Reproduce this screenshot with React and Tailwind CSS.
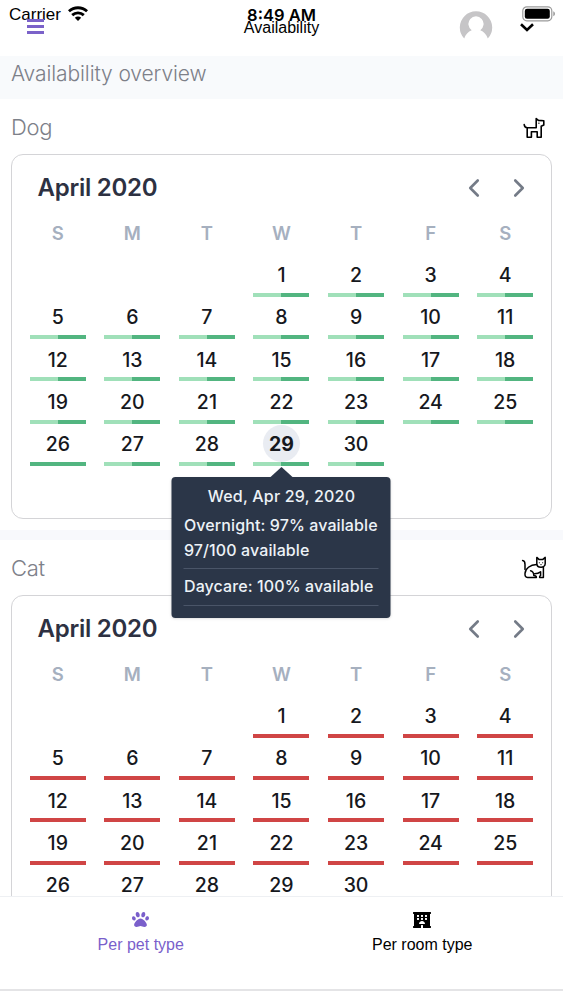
import { FaPaw, FaHotel } from 'react-icons/fa';
import { ChevronLeft, ChevronRight } from 'lucide-react';

const WEEKDAYS = ['S', 'M', 'T', 'W', 'T', 'F', 'S'];
const FIRST_WEEKDAY = 3;
const DAYS = Array.from({ length: 30 }, (_, i) => i + 1);

function WifiIcon() {
  return (
    <svg viewBox="0 0 20 15" className="-mt-[3px] ml-[2px] w-5 h-[15px]" fill="none" stroke="currentColor" strokeWidth="2.9">
      <path d="M0.9 5.3C6 0.5 14 0.5 19.1 5.3" />
      <path d="M4.2 9.1C7.5 6.1 12.5 6.1 15.8 9.1" />
      <path d="M10 15L6.8 11.7C8.6 10.1 11.4 10.1 13.2 11.7Z" fill="currentColor" stroke="none" />
    </svg>
  );
}

function BatteryIcon() {
  return (
    <svg viewBox="0 0 34 16" className="mt-px w-[34px] h-4">
      <rect x="0.8" y="0.8" width="29" height="14" rx="4" fill="#fff" stroke="#9b9b9b" strokeWidth="1.2" />
      <rect x="2.8" y="2.8" width="25" height="10" rx="2.2" fill="#000" />
      <path d="M31.4 5.3C33.3 6.2 33.3 9.4 31.4 10.3Z" fill="#8a8a8a" />
    </svg>
  );
}

function Avatar() {
  return (
    <svg viewBox="0 0 34 30" className="w-[34px] h-[30px]">
      <path
        d="M5.2 28.6A16.2 16.2 0 1 1 28.8 28.6C27.6 24.6 24.8 21.4 21.3 20.2A7.6 7.6 0 1 0 12.7 20.2C9.2 21.4 6.4 24.6 5.2 28.6Z"
        fill="#c6c5c7"
      />
    </svg>
  );
}

function DogIcon() {
  return (
    <svg viewBox="0 0 24 24" className="w-6 h-6" fill="none" stroke="#000" strokeWidth="1.6" strokeLinejoin="round" strokeLinecap="round">
      <path d="M1.2 9.6C1.4 11.4 2.4 12.6 4.2 12.8H13.2V3.6L15.4 5.4L20.8 5.8V10L18.2 11.2V22.2H14.2V16.8H8.4V22.2H4.2V12.8" />
      <path d="M15.8 8.2h.2" strokeWidth="1.2" />
    </svg>
  );
}

function CatIcon() {
  return (
    <svg viewBox="0 0 26 24" className="w-[26px] h-6" fill="none" stroke="#000" strokeWidth="1.5" strokeLinejoin="round" strokeLinecap="round">
      <path d="M1.6 4.6C3.6 4.8 4 6.2 4 8.4V13.6" />
      <path d="M15.6 8.6C9 8.8 4.4 12.6 4 17.4C3.8 20 4.6 21.4 6.6 21.4H15.4C15.4 20 14.4 19.4 12.8 19.4C12.8 17 11.6 15.4 9.6 14.8" />
      <path d="M15.8 1.4L18.2 3.6H21.6L24.2 1.4V7.4C24.2 9.8 22.2 11.2 20 11.2S15.8 9.8 15.8 7.4Z" />
      <path d="M22.4 11V21.4H18.6C18.4 20.2 18.8 19.6 19.6 19.4V15.8C18 17.2 16 17.8 13.6 17.8" />
      <path d="M18.3 6.8h.1M21.6 6.8h.1M19.9 8.6h.2" strokeWidth="1.1" />
    </svg>
  );
}

function Tooltip() {
  return (
    <div className="absolute left-1/2 top-[38px] z-20 -translate-x-1/2 w-[219px] h-[141px] rounded-[4px] bg-[#2b3648] px-3 pt-[7px] text-left text-[16px] font-medium tracking-[0.1px] text-[#edf2f7] shadow">
      <div className="absolute -top-[10px] left-1/2 -translate-x-1/2 border-x-[11px] border-b-[10px] border-x-transparent border-b-[#2b3648]" />
      <p className="text-center leading-6 tracking-[0.2px]">Wed, Apr 29, 2020</p>
      <p className="mt-[5px] leading-6 whitespace-nowrap">Overnight: 97% available</p>
      <p className="mt-px leading-6 whitespace-nowrap">97/100 available</p>
      <div className="mt-[6px] border-t border-[#4a5568]" />
      <p className="mt-[5px] leading-6 whitespace-nowrap">Daycare: 100% available</p>
      <div className="mt-[7px] border-t border-[#4a5568]" />
    </div>
  );
}

function Bar({ full, available }) {
  if (!available) return <div className="h-1 w-14 bg-[#d04545]" />;
  return (
    <div className="flex h-1 w-14">
      <div className={full ? 'w-1/2 bg-[#52b580]' : 'w-1/2 bg-[#a0e0b9]'} />
      <div className="w-1/2 bg-[#52b580]" />
    </div>
  );
}

function Calendar({ available, selected }) {
  return (
    <div className="mx-[11px] h-[365px] rounded-xl border border-[#d4d4d7] px-[8.5px] font-[Inter,sans-serif]">
      <div className="flex h-[66px] items-center justify-between pl-[17px] pr-[9px]">
        <h2 className="text-[24px] font-semibold tracking-[-0.25px] text-[#2d3142]">April 2020</h2>
        <div className="flex gap-[15px] text-[#747b87]">
          <ChevronLeft size={30} strokeWidth={2.1} />
          <ChevronRight size={30} strokeWidth={2.1} />
        </div>
      </div>
      <div className="grid grid-cols-7 h-[33.5px] text-center text-[18.5px] leading-[25px] font-semibold text-[#a6b0bf]">
        {WEEKDAYS.map((d, i) => (
          <div key={i}>{d}</div>
        ))}
      </div>
      <div className="grid grid-cols-7 auto-rows-[42.25px] text-[19.5px] text-[#16181d]">
        {Array.from({ length: FIRST_WEEKDAY }, (_, i) => (
          <div key={`blank-${i}`} />
        ))}
        {DAYS.map((day) => (
          <div key={day} className="relative flex flex-col items-center justify-end">
            <div
              className={
                day === selected
                  ? 'flex h-[37px] w-[37px] items-center justify-center rounded-full bg-[#e9ecf2] pt-[2px] font-bold'
                  : 'flex h-[37px] items-center justify-center pt-[3px] font-medium'
              }
            >
              {day}
            </div>
            <Bar available={available} full={day === 26} />
            {day === selected && (
              <div className="absolute inset-x-0 top-[15px]">
                <Tooltip />
              </div>
            )}
          </div>
        ))}
      </div>
    </div>
  );
}

function PetSection({ name, icon, available, selected }) {
  return (
    <section>
      <div className="flex h-[55px] items-center justify-between pl-[11px] pr-4">
        <h3 className="pt-[2px] text-[22px] font-light tracking-[-0.3px] font-[Inter,sans-serif] text-[#7d8089]">{name}</h3>
        {icon}
      </div>
      <Calendar available={available} selected={selected} />
    </section>
  );
}

export default function App() {
  return (
    <div className="flex h-[1000px] w-[563px] flex-col overflow-hidden bg-white font-['Liberation_Sans',sans-serif] text-black">
      <header className="relative h-14 shrink-0 bg-white">
        <div className="grid grid-cols-3 pt-[5px] leading-5">
          <div className="flex items-center gap-[5px] pl-[9px]">
            <span className="text-[17px]">Carrier</span>
            <WifiIcon />
          </div>
          <div className="text-center font-[Inter,sans-serif] text-[16.5px] font-semibold">8:49 AM</div>
          <div className="flex justify-end pr-[7px]">
            <BatteryIcon />
          </div>
        </div>
        {/* app bar sits under the device status bar */}
        <div className="absolute left-[27px] top-[19px] flex w-[17px] flex-col gap-[3px]">
          <span className="h-[3px] bg-[#7b62c9]" />
          <span className="h-[3px] bg-[#7b62c9]" />
          <span className="h-[3px] bg-[#7b62c9]" />
        </div>
        <div className="absolute inset-x-0 top-[18px] text-center text-[16px] leading-5">Availability</div>
        <div className="absolute left-[459px] top-[10px]">
          <Avatar />
        </div>
        <svg viewBox="0 0 14 9" className="absolute left-[520px] top-[23px] h-[9px] w-[14px]" fill="none" stroke="#000" strokeWidth="2.6">
          <path d="M1 1.2L7 6.9L13 1.2" />
        </svg>
      </header>

      <div className="flex h-[43px] shrink-0 items-center bg-[#f8fafc] pl-[11px] pb-2">
        <h1 className="font-[Inter,sans-serif] text-[21px] font-light tracking-[-0.1px] text-[#7d8089]">Availability overview</h1>
      </div>

      <main className="min-h-0 flex-1 overflow-hidden">
        <PetSection name="Dog" icon={<DogIcon />} available selected={29} />
        <div className="mt-[11px] h-[10px] bg-[#f8f9fc]" />
        <PetSection name="Cat" icon={<CatIcon />} />
      </main>

      <nav className="grid h-[104px] shrink-0 grid-cols-2 border-t border-[#eef0f3] bg-white text-[16px]">
        <div className="flex flex-col items-center pt-[14px] text-[#7a5fcb]">
          <FaPaw size={17} />
          <span className="mt-[7px] leading-5">Per pet type</span>
        </div>
        <div className="flex flex-col items-center pt-[14px]">
          <FaHotel size={18} />
          <span className="mt-[6px] leading-5">Per room type</span>
        </div>
        <div className="col-span-2 self-end mb-[9px] h-[2px] bg-[#e4e4e6]" />
      </nav>
    </div>
  );
}
